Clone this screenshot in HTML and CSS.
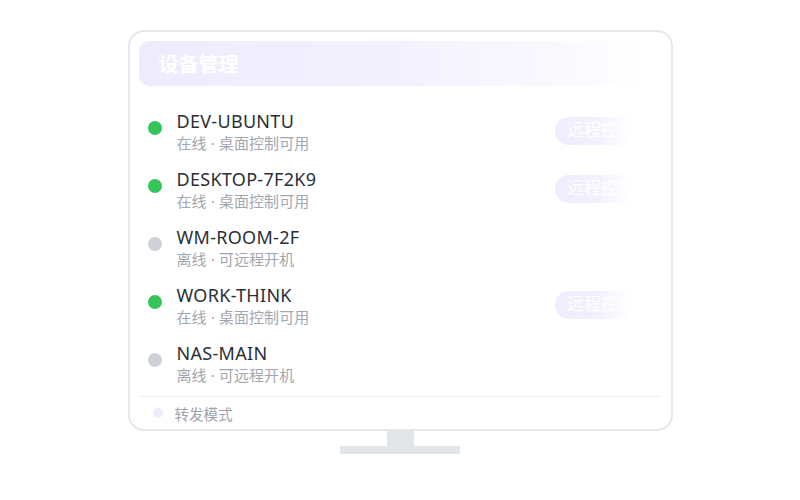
FILE: index.html
```html
<!DOCTYPE html>
<html lang="zh-CN">
<head>
<meta charset="utf-8">
<link rel="stylesheet" href="styles.css">
</head>
<body>
<div class="stage">
  <div class="monitor">
    <div class="header"><span class="title">设备管理</span></div>
    <div class="list">
      <div class="row">
        <span class="dot on"></span>
        <div class="info"><div class="name">DEV-UBUNTU</div><div class="sub">在线 · 桌面控制可用</div></div>
        <span class="btn">远程控制</span>
      </div>
      <div class="row">
        <span class="dot on"></span>
        <div class="info"><div class="name">DESKTOP-7F2K9</div><div class="sub">在线 · 桌面控制可用</div></div>
        <span class="btn">远程控制</span>
      </div>
      <div class="row">
        <span class="dot off"></span>
        <div class="info"><div class="name">WM-ROOM-2F</div><div class="sub">离线 · 可远程开机</div></div>
      </div>
      <div class="row">
        <span class="dot on"></span>
        <div class="info"><div class="name">WORK-THINK</div><div class="sub">在线 · 桌面控制可用</div></div>
        <span class="btn">远程控制</span>
      </div>
      <div class="row">
        <span class="dot off"></span>
        <div class="info"><div class="name">NAS-MAIN</div><div class="sub">离线 · 可远程开机</div></div>
      </div>
    </div>
    <div class="footer"><span class="fdot"></span><span class="ftext">转发模式</span></div>
  </div>
  <div class="neck"></div>
  <div class="base"></div>
</div>
</body>
</html>
```
FILE: styles.css
```css
html, body {
  margin: 0;
  padding: 0;
  background: #ffffff;
  font-family: "Noto Sans", "Noto Sans CJK SC", sans-serif;
}
.stage {
  width: 800px;
  height: 500px;
  display: flex;
  flex-direction: column;
  align-items: center;
  padding-top: 30px;
  box-sizing: border-box;
}
.monitor {
  width: 545px;
  height: 401px;
  box-sizing: border-box;
  border: 2px solid #e5e7ea;
  border-radius: 16px;
  padding: 9px 10px 0 9px;
  display: flex;
  flex-direction: column;
  background: #fff;
}
.header {
  height: 45px;
  border-radius: 10px;
  background: linear-gradient(90deg, #efebfd 0%, #f3f0fe 45%, rgba(249, 248, 255, 0.7) 85%, rgba(255, 255, 255, 0) 97%);
  display: flex;
  align-items: center;
  padding-left: 20px;
}
.title {
  color: #ffffff;
  font-family: "Noto Sans CJK SC", sans-serif;
  font-size: 20px;
  font-weight: 700;
  line-height: 24px;
}
.list {
  padding: 16px 0 4px 1px;
  display: flex;
  flex-direction: column;
}
.row {
  height: 58px;
  display: flex;
  align-items: center;
  padding-left: 8px;
}
.dot {
  width: 14px;
  height: 14px;
  border-radius: 50%;
  flex: none;
  margin-bottom: 6px;
}
.dot.on { background: #34c65a; }
.dot.off { background: #cdd0d6; }
.info {
  margin-left: 15px;
  flex: 1;
}
.name {
  font-size: 18px;
  line-height: 22px;
  color: #2b2f36;
  letter-spacing: 0.3px;
}
.sub {
  font-size: 15px;
  line-height: 20px;
  margin-top: 1px;
  color: #a2a7af;
  letter-spacing: 0.1px;
}
.btn {
  width: 88px;
  height: 28px;
  box-sizing: border-box;
  border-radius: 14px;
  margin-right: 18px;
  margin-bottom: 0;
  padding-left: 12px;
  background: linear-gradient(90deg, #f0ecfe 0%, #f2effe 45%, rgba(255, 255, 255, 0) 88%);
  color: #ffffff;
  font-family: serif;
  font-size: 17px;
  line-height: 28px;
  white-space: nowrap;
  overflow: hidden;
}
.footer {
  border-top: 1px solid #eef0f3;
  height: 32px;
  display: flex;
  align-items: center;
  padding-left: 14px;
}
.fdot {
  width: 10px;
  height: 10px;
  border-radius: 50%;
  background: #eeebfd;
  flex: none;
}
.ftext {
  margin-left: 12px;
  font-size: 14.5px;
  color: #9ea3ab;
}
.neck {
  width: 27px;
  height: 15px;
  background: #e2e5e9;
}
.base {
  width: 120px;
  height: 8px;
  background: #e2e5e9;
}
```
